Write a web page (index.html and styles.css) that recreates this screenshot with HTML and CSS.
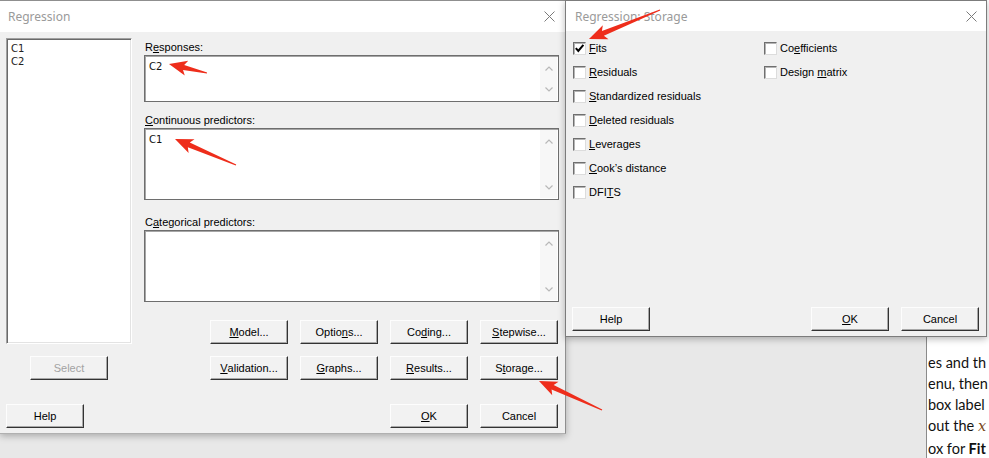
FILE: index.html
```html
<!DOCTYPE html>
<html>
<head>
<meta charset="utf-8">
<title>Regression</title>
<link rel="stylesheet" href="styles.css">
</head>
<body>
<div class="desktop">
  <div class="doc">
    <p>es and th</p>
    <p>enu, then</p>
    <p>box label</p>
    <p>out the <i class="math">x</i></p>
    <p class="gap">ox for <b>Fit</b></p>
  </div>

  <section class="win win-main">
    <header class="titlebar">
      <span class="title">Regression</span>
      <svg class="close" width="11" height="11" viewBox="0 0 11 11"><path d="M0.5 0.5 L10.5 10.5 M10.5 0.5 L0.5 10.5" stroke="#7a7a7a" stroke-width="1"/></svg>
    </header>
    <div class="body main-body">
      <div class="main-top">
        <div class="left-col">
          <div class="listbox">
            <div>C1</div>
            <div>C2</div>
          </div>
          <div class="btn disabled">Select</div>
        </div>
        <div class="right-col">
          <div class="lbl lbl-first">R<u>e</u>sponses:</div>
          <div class="field field-short">
            <div class="field-text">C2</div>
            <div class="scroll">
              <svg width="8" height="5" viewBox="0 0 8 5"><polyline points="0.5,4.5 4,1 7.5,4.5" fill="none" stroke="#b8b8b8" stroke-width="1.2"/></svg>
              <svg width="8" height="5" viewBox="0 0 8 5"><polyline points="0.5,0.5 4,4 7.5,0.5" fill="none" stroke="#b8b8b8" stroke-width="1.2"/></svg>
            </div>
          </div>
          <div class="lbl lbl-second"><u>C</u>ontinuous predictors:</div>
          <div class="field field-tall">
            <div class="field-text">C1</div>
            <div class="scroll">
              <svg width="8" height="5" viewBox="0 0 8 5"><polyline points="0.5,4.5 4,1 7.5,4.5" fill="none" stroke="#b8b8b8" stroke-width="1.2"/></svg>
              <svg width="8" height="5" viewBox="0 0 8 5"><polyline points="0.5,0.5 4,4 7.5,0.5" fill="none" stroke="#b8b8b8" stroke-width="1.2"/></svg>
            </div>
          </div>
          <div class="lbl lbl-third">C<u>a</u>tegorical predictors:</div>
          <div class="field field-tall">
            <div class="field-text"></div>
            <div class="scroll">
              <svg width="8" height="5" viewBox="0 0 8 5"><polyline points="0.5,4.5 4,1 7.5,4.5" fill="none" stroke="#b8b8b8" stroke-width="1.2"/></svg>
              <svg width="8" height="5" viewBox="0 0 8 5"><polyline points="0.5,0.5 4,4 7.5,0.5" fill="none" stroke="#b8b8b8" stroke-width="1.2"/></svg>
            </div>
          </div>
          <div class="btn-grid">
            <div class="btn"><u>M</u>odel...</div>
            <div class="btn">Optio<u>n</u>s...</div>
            <div class="btn">Co<u>d</u>ing...</div>
            <div class="btn"><u>S</u>tepwise...</div>
            <div class="btn"><u>V</u>alidation...</div>
            <div class="btn"><u>G</u>raphs...</div>
            <div class="btn"><u>R</u>esults...</div>
            <div class="btn">S<u>t</u>orage...</div>
          </div>
        </div>
      </div>
      <div class="bottom-row">
        <div class="btn">Help</div>
        <div class="btn-pair">
          <div class="btn"><u>O</u>K</div>
          <div class="btn">Cancel</div>
        </div>
      </div>
    </div>
  </section>

  <section class="win win-storage">
    <header class="titlebar titlebar-storage">
      <span class="title">Regression: Storage</span>
      <svg class="close" width="11" height="11" viewBox="0 0 11 11"><path d="M0.5 0.5 L10.5 10.5 M10.5 0.5 L0.5 10.5" stroke="#7a7a7a" stroke-width="1"/></svg>
    </header>
    <div class="body storage-body">
      <div class="checks">
        <div class="check-col check-col-1">
          <div class="check"><span class="cb checked"><svg width="11" height="11" viewBox="0 0 11 11"><path d="M1.8 5.2 L4.3 8 L9.4 1.8" fill="none" stroke="#000" stroke-width="2"/></svg></span><span><u>F</u>its</span></div>
          <div class="check"><span class="cb"></span><span><u>R</u>esiduals</span></div>
          <div class="check"><span class="cb"></span><span><u>S</u>tandardized residuals</span></div>
          <div class="check"><span class="cb"></span><span><u>D</u>eleted residuals</span></div>
          <div class="check"><span class="cb"></span><span><u>L</u>everages</span></div>
          <div class="check"><span class="cb"></span><span><u>C</u>ook’s distance</span></div>
          <div class="check"><span class="cb"></span><span>DFI<u>T</u>S</span></div>
        </div>
        <div class="check-col">
          <div class="check"><span class="cb"></span><span>Co<u>e</u>fficients</span></div>
          <div class="check"><span class="cb"></span><span>Design <u>m</u>atrix</span></div>
        </div>
      </div>
      <div class="bottom-row storage-bottom">
        <div class="btn">Help</div>
        <div class="btn-pair">
          <div class="btn"><u>O</u>K</div>
          <div class="btn">Cancel</div>
        </div>
      </div>
    </div>
  </section>

  <svg class="arrows" width="989" height="458" viewBox="0 0 989 458">
    <polygon points="207.14,72.42 184.18,65.03 188.24,60.85 169,64 184.78,75.45 183.02,69.89 206.86,73.58"/>
    <polygon points="236.24,164.45 189.78,142.58 194.50,139.16 175,139 188.62,152.96 187.82,147.18 235.76,165.55"/>
    <polygon points="659.77,9.44 601.94,31.02 602.82,25.25 589,39 608.50,39.13 603.84,35.64 660.23,10.56"/>
    <polygon points="602.25,409.45 553.68,385.00 558.49,381.72 539,381 552.21,395.34 551.58,389.54 601.75,410.55"/>
  </svg>
</div>
</body>
</html>
```

FILE: styles.css
```css
* { box-sizing: border-box; }

html, body {
  margin: 0;
  padding: 0;
}

body {
  width: 989px;
  height: 458px;
  overflow: hidden;
  background: #e8e8e8;
  font-family: "Liberation Sans", Arial, sans-serif;
  font-size: 11px;
  color: #000;
}

.desktop {
  position: relative;
  width: 989px;
  height: 458px;
}

u {
  text-decoration: underline;
  text-underline-offset: 1px;
}

/* background document */
.doc {
  position: absolute;
  left: 926px;
  top: 0;
  width: 63px;
  height: 458px;
  background: #fff;
  border-left: 1px solid #8a8a8a;
  overflow: hidden;
  padding-top: 352px;
  padding-left: 1px;
  font-family: Lato, "Open Sans", sans-serif;
  font-size: 14.5px;
  color: #111;
}

.doc p {
  margin: 0;
  line-height: 21px;
  white-space: nowrap;
}

.doc p.gap {
  margin-top: 3px;
  line-height: 18px;
}

.doc .math {
  font-family: "DejaVu Serif", "Liberation Serif", serif;
  color: #7a4a1c;
}

/* windows */
.win {
  position: absolute;
  top: 0;
  display: flex;
  flex-direction: column;
  background: #f0f0f0;
  box-shadow: 0 2px 7px rgba(0, 0, 0, 0.28);
}

.win-main {
  left: 0;
  width: 566px;
  height: 434px;
  border-top: 1px solid #8f8f8f;
  border-right: 1px solid #8f8f8f;
  border-bottom: 1px solid #b0b0b0;
}

.win-storage {
  left: 565px;
  width: 422px;
  height: 337px;
  border: 1px solid #7c7c7c;
}

.titlebar {
  height: 31px;
  flex: none;
  background: #fff;
  display: flex;
  align-items: center;
  justify-content: space-between;
  padding: 0 10px 0 8px;
}

.titlebar-storage {
  height: 30px;
  padding: 0 9px 0 9px;
}

.title {
  font-family: "Noto Sans", "Open Sans", sans-serif;
  font-size: 12px;
  color: #9a9a9a;
}

.close { display: block; }

.body {
  flex: 1;
  display: flex;
  flex-direction: column;
}

/* main dialog */
.main-body {
  padding: 6px 6px 5px 6px;
}

.main-top {
  display: flex;
  gap: 12px;
}

.left-col {
  width: 126px;
  display: flex;
  flex-direction: column;
  align-items: center;
  gap: 12px;
}

.listbox {
  width: 126px;
  height: 306px;
  background: #fff;
  border: 1px solid;
  border-color: #a0a0a0 #ffffff #ffffff #a0a0a0;
  box-shadow: inset 1px 1px 0 #6a6a6a, inset -1px -1px 0 #e3e3e3;
  padding: 3px 4px;
  font-family: "DejaVu Sans", Verdana, sans-serif;
  font-size: 10px;
  line-height: 13px;
  color: #222;
}

.right-col {
  width: 415px;
  display: flex;
  flex-direction: column;
}

.lbl {
  height: 14px;
  line-height: 14px;
  padding-left: 1px;
  margin-bottom: 1px;
}

.lbl-first { margin-top: 2px; }
.lbl-second { margin-top: 11px; }
.lbl-third { margin-top: 15px; }

.field {
  display: flex;
  background: #fff;
  border: 1px solid #6e6e6e;
  box-shadow: inset 1px 1px 0 #a6a6a6;
}

.field-short { height: 47px; }
.field-tall { height: 72px; }

.field-text {
  flex: 1;
  padding: 4px 4px;
  font-family: "DejaVu Sans", Verdana, sans-serif;
  font-size: 10px;
  line-height: 13px;
  color: #111;
}

.scroll {
  width: 17px;
  margin: 1px 1px 1px 0;
  background: #f7f7f7;
  display: flex;
  flex-direction: column;
  align-items: center;
  justify-content: space-between;
  padding: 9px 0 8px;
}

.scroll svg { display: block; }

.btn-grid {
  margin-top: 18px;
  align-self: flex-end;
  margin-right: 1px;
  display: grid;
  grid-template-columns: repeat(4, 78px);
  column-gap: 12px;
  row-gap: 12px;
}

/* buttons */
.btn {
  width: 78px;
  height: 24px;
  display: flex;
  align-items: center;
  justify-content: center;
  background: #f2f2f2;
  border: 1px solid;
  border-color: #fdfdfd #333333 #333333 #fdfdfd;
  box-shadow: inset -1px -1px 0 #a8a8a8;
  color: #000;
  white-space: nowrap;
}

.btn.disabled { color: #a3a3a3; }

.bottom-row {
  margin-top: 24px;
  display: flex;
  justify-content: space-between;
  align-items: center;
}

.btn-pair {
  display: flex;
  gap: 12px;
  margin-right: 1px;
}

/* storage dialog */
.storage-body {
  padding: 5px 6px 5px 6px;
}

.checks {
  display: flex;
  margin-left: 1px;
}

.check-col {
  display: flex;
  flex-direction: column;
}

.check-col-1 { width: 191px; }

.check {
  height: 24px;
  display: flex;
  align-items: center;
  gap: 3px;
  white-space: nowrap;
}

.cb {
  width: 13px;
  height: 13px;
  flex: none;
  background: #fff;
  border: 1px solid;
  border-color: #6f6f6f #dcdcdc #dcdcdc #6f6f6f;
  box-shadow: inset 1px 1px 0 #b4b4b4;
  position: relative;
}

.cb svg {
  position: absolute;
  left: 0;
  top: 0;
}

.storage-bottom {
  margin-top: auto;
}

/* annotation arrows */
.arrows {
  position: absolute;
  left: 0;
  top: 0;
  pointer-events: none;
}

.arrows polygon {
  fill: #ee2d1b;
}
```
